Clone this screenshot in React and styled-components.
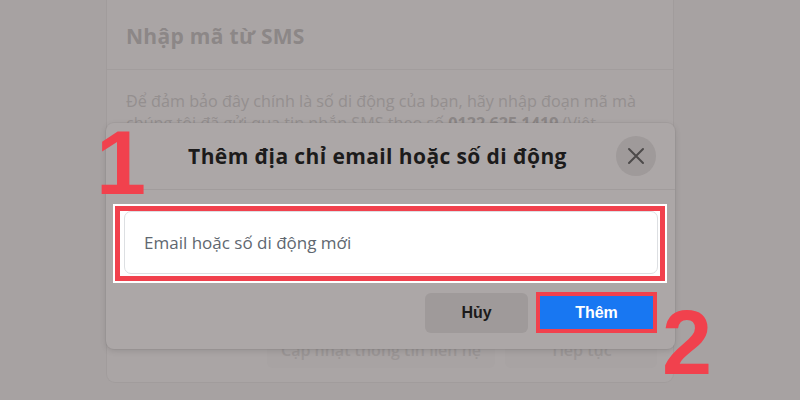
import React from "react";
import styled, { createGlobalStyle } from "styled-components";

const Global = createGlobalStyle`
  html, body { margin: 0; padding: 0; }
  body {
    width: 800px;
    height: 400px;
    overflow: hidden;
    background: #a7a2a2;
    font-family: "Open Sans", "Noto Sans", Arial, sans-serif;
  }
`;

const Stage = styled.div`
  position: relative;
  width: 800px;
  height: 400px;
  overflow: hidden;
`;

const BackCard = styled.section`
  margin: 0 0 0 107px;
  width: 566px;
  height: 382px;
  box-sizing: border-box;
  background: #aaa5a5;
  border-radius: 0 0 8px 8px;
  box-shadow: 0 0 0 1px rgba(0, 0, 0, 0.03);
  display: flex;
  flex-direction: column;
`;

const BackHeader = styled.header`
  height: 70px;
  box-sizing: border-box;
  padding: 20px 19px 0;
  border-bottom: 1px solid #a29d9d;
`;

const BackTitle = styled.h2`
  margin: 0;
  font-size: 21px;
  letter-spacing: 0.3px;
  font-weight: 700;
  color: #8c8787;
  line-height: 32px;
`;

const BackBody = styled.p`
  margin: 0;
  padding: 20px 28px 0 19px;
  font-size: 16.2px;
  line-height: 22px;
  color: #948f8f;
  flex: 1;

  b {
    color: #8b8686;
    font-weight: 700;
  }
`;

const BackFooter = styled.footer`
  display: flex;
  justify-content: flex-end;
  gap: 10px;
  padding: 0 16px 14px;
`;

const BackButton = styled.div`
  width: ${(p) => p.$w}px;
  height: 36px;
  border-radius: 6px;
  background: #a8a3a3;
  color: #9a9595;
  font-size: 16px;
  font-weight: 600;
  display: flex;
  align-items: center;
  justify-content: center;
`;

const Dialog = styled.div`
  position: absolute;
  left: 106px;
  top: 123px;
  width: 569px;
  height: 226px;
  background: #aca7a7;
  border-radius: 8px;
  box-shadow: 0 2px 6px rgba(0, 0, 0, 0.12), 0 0 0 1px rgba(0, 0, 0, 0.03);
  display: flex;
  flex-direction: column;
`;

const DialogHeader = styled.div`
  height: 67px;
  box-sizing: border-box;
  display: grid;
  grid-template-columns: 1fr 40px;
  align-items: center;
  padding: 0 19px 0 33px;
  border-bottom: 1px solid #a19c9c;
`;

const DialogTitle = styled.h3`
  margin: 0;
  text-align: center;
  font-size: 21px;
  letter-spacing: 0.4px;
  font-weight: 700;
  color: #1c1b1b;
`;

const CloseButton = styled.div`
  width: 40px;
  height: 40px;
  border-radius: 50%;
  background: #9f9a9a;
  display: flex;
  align-items: center;
  justify-content: center;
`;

const DialogBody = styled.div`
  padding: 14px 8px 0 7px;
`;

const HighlightFrame = styled.div`
  border: 2px solid #ffffff;
  box-sizing: border-box;
`;

const RedFrame = styled.div`
  border: 5px solid #f1414d;
  background: #ffffff;
  padding: 0 2px 2px 4px;
`;

const Input = styled.div`
  height: 63px;
  box-sizing: border-box;
  border: 1px solid #dddfe2;
  border-radius: 7px;
  background: #fff;
  display: flex;
  align-items: center;
  padding: 0 19px;
  font-size: 17px;
  color: #606770;
`;

const DialogFooter = styled.div`
  display: flex;
  justify-content: flex-end;
  align-items: center;
  gap: 8px;
  padding: 9px 18px 0 0;
`;

const CancelButton = styled.div`
  width: 103px;
  height: 40px;
  border-radius: 6px;
  background: #9f9a9a;
  color: #1c1a1a;
  font-family: "Liberation Sans", Arial, sans-serif;
  font-size: 16px;
  font-weight: 700;
  display: flex;
  align-items: center;
  justify-content: center;
`;

const PrimaryWrap = styled.div`
  position: relative;
  width: 121px;
  height: 41px;
`;

const PrimaryButton = styled.div`
  width: 100%;
  height: 100%;
  box-sizing: border-box;
  border: 4px solid #f1414d;
  background: #1877f2;
  color: #ffffff;
  font-family: "Liberation Sans", Arial, sans-serif;
  font-size: 16px;
  font-weight: 700;
  display: flex;
  align-items: center;
  justify-content: center;
`;

const Marker = styled.div`
  position: absolute;
  left: ${(p) => p.$x}px;
  top: ${(p) => p.$y}px;
  font-family: "Liberation Sans", Arial, sans-serif;
  font-weight: 700;
  font-size: 90px;
  line-height: 1;
  color: #f1414d;
`;

export default function App() {
  return (
    <Stage>
      <Global />
      <BackCard>
        <BackHeader>
          <BackTitle>Nhập mã từ SMS</BackTitle>
        </BackHeader>
        <BackBody>
          Để đảm bảo đây chính là số di động của bạn, hãy nhập đoạn mã mà
          chúng tôi đã gửi qua tin nhắn SMS theo số <b>0122 625 1419</b> (Việt
          Nam).
        </BackBody>
        <BackFooter>
          <BackButton $w={228}>Cập nhật thông tin liên hệ</BackButton>
          <BackButton $w={152}>Tiếp tục</BackButton>
        </BackFooter>
      </BackCard>

      <Dialog>
        <DialogHeader>
          <DialogTitle>Thêm địa chỉ email hoặc số di động</DialogTitle>
          <CloseButton>
            <svg width="18" height="18" viewBox="0 0 18 18">
              <path
                d="M2 2 L16 16 M16 2 L2 16"
                stroke="#4d4a4a"
                strokeWidth="2"
                strokeLinecap="round"
              />
            </svg>
          </CloseButton>
        </DialogHeader>
        <DialogBody>
          <HighlightFrame>
            <RedFrame>
              <Input>Email hoặc số di động mới</Input>
            </RedFrame>
          </HighlightFrame>
        </DialogBody>
        <DialogFooter>
          <CancelButton>Hủy</CancelButton>
          <PrimaryWrap>
            <PrimaryButton>Thêm</PrimaryButton>
          </PrimaryWrap>
        </DialogFooter>
      </Dialog>

      <Marker $x={96} $y={118}>1</Marker>
      <Marker $x={662} $y={298}>2</Marker>
    </Stage>
  );
}
